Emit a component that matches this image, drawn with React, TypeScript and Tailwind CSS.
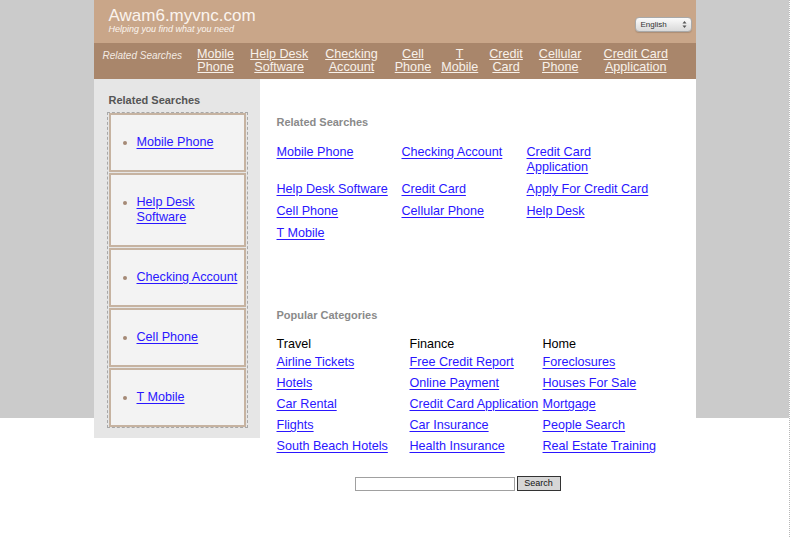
const navLinks = [
  { lines: ['Mobile', 'Phone'], cls: 'ml-[15px]' },
  { lines: ['Help Desk', 'Software'], cls: 'ml-[16px]' },
  { lines: ['Checking', 'Account'], cls: 'ml-[17px]' },
  { lines: ['Cell', 'Phone'], cls: 'ml-[17px]' },
  { lines: ['T', 'Mobile'], cls: 'ml-[10px]' },
  { lines: ['Credit', 'Card'], cls: 'ml-[11px]' },
  { lines: ['Cellular', 'Phone'], cls: 'ml-[16px]' },
  { lines: ['Credit Card', 'Application'], cls: 'ml-[22px]' },
]

const sideLinks = [
  ['Mobile Phone'],
  ['Help Desk', 'Software'],
  ['Checking Account'],
  ['Cell Phone'],
  ['T Mobile'],
]

const related = [
  'Mobile Phone',
  'Checking Account',
  'Credit Card Application',
  'Help Desk Software',
  'Credit Card',
  'Apply For Credit Card',
  'Cell Phone',
  'Cellular Phone',
  'Help Desk',
  'T Mobile',
]

const categories = [
  {
    title: 'Travel',
    links: ['Airline Tickets', 'Hotels', 'Car Rental', 'Flights', 'South Beach Hotels'],
  },
  {
    title: 'Finance',
    links: ['Free Credit Report', 'Online Payment', 'Credit Card Application', 'Car Insurance', 'Health Insurance'],
  },
  {
    title: 'Home',
    links: ['Foreclosures', 'Houses For Sale', 'Mortgage', 'People Search', 'Real Estate Training'],
  },
]

const linkCls = 'text-[#2a16ff] underline underline-offset-[2px]'

function LangSelect() {
  return (
    <div className="flex h-[15px] w-[57px] items-center justify-between rounded-[4px] border border-[#a9a9a9] bg-gradient-to-b from-[#fbfbfb] to-[#d9d9d9] pl-[5px] pr-[4px] shadow-[0_1px_1px_rgba(0,0,0,0.15)]">
      <span className="text-[8px] leading-none text-[#333]">English</span>
      <svg width="5" height="9" viewBox="0 0 5 9" className="text-[#555]">
        <path d="M0.5 3.5 L2.5 1 L4.5 3.5 Z" fill="currentColor" />
        <path d="M0.5 5.5 L2.5 8 L4.5 5.5 Z" fill="currentColor" />
      </svg>
    </div>
  )
}

export default function App() {
  return (
    <div className="min-h-[537px] w-full bg-white bg-[linear-gradient(#cbcbcb,#cbcbcb)] bg-[length:789px_418px] bg-no-repeat font-['Liberation_Sans',Arial,sans-serif]">
      <div className="min-h-[537px] w-[790px] border-r border-dotted border-[#b8b8b8]">
        <div className="mx-auto w-[602px]">
          {/* Site header */}
          <header className="flex h-[43px] items-start justify-between bg-[#c9a689] pl-[15px] pr-[4px]">
            <div className="pt-[7px]">
              <div className="text-[17px] leading-[17px] text-[#fbf4ee]">Awam6.myvnc.com</div>
              <div className="text-[9px] italic leading-[10px] text-[#fbf4ee]">Helping you find what you need</div>
            </div>
            <div className="pt-[17px]">
              <LangSelect />
            </div>
          </header>

          {/* Top nav */}
          <nav className="flex h-[36px] items-start bg-[#a9866b] pl-[9px] pt-[5px]">
            <span className="pt-[1px] text-[10px] italic leading-[13px] text-[#f4ebe3]">Related Searches</span>
            {navLinks.map((l) => (
              <a key={l.lines.join(' ')} href="#" className={`text-center text-[12.6px] leading-[13px] text-[#f8f1ea] underline underline-offset-[1px] ${l.cls}`}>
                {l.lines[0]}
                <br />
                {l.lines[1]}
              </a>
            ))}
          </nav>

          <div className="flex">
            {/* Sidebar */}
            <aside className="h-[359px] w-[166px] shrink-0 bg-[#e6e6e6] pl-[13px] pr-[12px] pt-[14px]">
              <h3 className="mb-[5px] pl-[2px] text-[11px] font-bold leading-[14px] text-[#555]">Related Searches</h3>
              <ul className="flex flex-col gap-[1px] border border-dashed border-[#a8a8a8] px-[1px] py-0">
                {sideLinks.map((lines) => (
                  <li key={lines.join(' ')} className="flex items-start border-2 border-[#c6b3a1] bg-[#f3f3f3] py-[20px] pl-[12px]">
                    <span className="mr-[10px] mt-[6px] h-[4px] w-[4px] shrink-0 rounded-full bg-[#a58a76]" />
                    <a href="#" className={`whitespace-nowrap text-[12.6px] leading-[15px] ${linkCls}`}>
                      {lines[0]}
                      {lines[1] && <br />}
                      {lines[1]}
                    </a>
                  </li>
                ))}
              </ul>
            </aside>

            {/* Main content */}
            <main className="flex-1 bg-white pb-[40px] pl-[17px] pt-[36px]">
              <h3 className="mb-[16px] text-[11px] font-bold leading-[14px] text-[#8a8a8a]">Related Searches</h3>
              <div className="grid grid-cols-[125px_125px_125px] gap-y-[7px]">
                {related.map((t) => (
                  <a key={t} href="#" className={`w-[122px] text-[12.6px] leading-[15px] ${linkCls}`}>
                    {t}
                  </a>
                ))}
              </div>

              <h3 className="mb-[15px] mt-[67px] text-[11px] font-bold leading-[14px] text-[#8a8a8a]">Popular Categories</h3>
              <div className="grid grid-cols-[133px_133px_133px]">
                {categories.map((c) => (
                  <div key={c.title} className="flex flex-col items-start">
                    <div className="text-[12.6px] leading-[15px] text-black">{c.title}</div>
                    {c.links.map((t) => (
                      <a key={t} href="#" className={`whitespace-nowrap text-[12.6px] leading-[21px] ${linkCls}`}>
                        {t}
                      </a>
                    ))}
                  </div>
                ))}
              </div>

              <form className="mt-[19px] flex items-center gap-[2px] pl-[78px]">
                <input type="text" className="h-[14px] w-[160px] border border-[#a0a0a0] bg-white" />
                <button type="button" className="h-[15px] w-[44px] border border-[#333] bg-[#d6d6d6] text-[9px] leading-none text-[#111]">
                  Search
                </button>
              </form>
            </main>
          </div>
        </div>
      </div>
    </div>
  )
}
